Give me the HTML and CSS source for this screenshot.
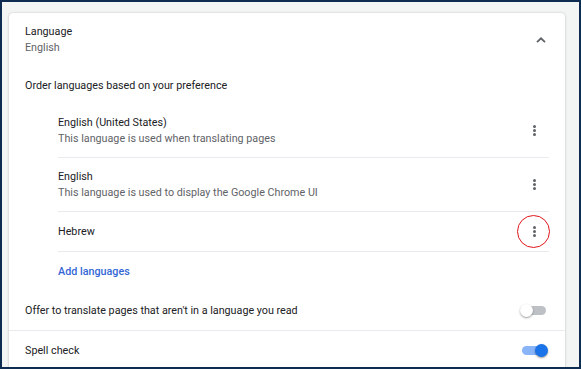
FILE: index.html
```html
<!DOCTYPE html>
<html lang="en">
<head>
    <meta charset="UTF-8">
    <meta name="viewport" content="width=device-width, initial-scale=1.0">
    <title>Languages</title>
    <link rel="stylesheet" href="styles.css">
</head>
<body>
    <div class="frame">
        <div class="card">
            <!-- Header bagian bahasa -->
            <div class="row header">
                <div class="text">
                    <div class="label">Language</div>
                    <div class="sub">English</div>
                </div>
                <svg class="chevron" width="10" height="6" viewBox="0 0 10 6">
                    <path d="M1 5.2 L5 1.3 L9 5.2" fill="none" stroke="#5f6368" stroke-width="1.8"/>
                </svg>
            </div>

            <div class="row order">Order languages based on your preference</div>

            <div class="list">
                <div class="item two-line">
                    <div class="text">
                        <div class="label">English (United States)</div>
                        <div class="sub">This language is used when translating pages</div>
                    </div>
                    <div class="kebab"><span></span><span></span><span></span></div>
                </div>
                <div class="item two-line">
                    <div class="text">
                        <div class="label">English</div>
                        <div class="sub">This language is used to display the Google Chrome UI</div>
                    </div>
                    <div class="kebab"><span></span><span></span><span></span></div>
                </div>
                <div class="item">
                    <div class="text">
                        <div class="label">Hebrew</div>
                    </div>
                    <div class="kebab marked"><span></span><span></span><span></span></div>
                </div>
                <div class="add">Add languages</div>
            </div>

            <div class="row setting">
                <div class="label">Offer to translate pages that aren't in a language you read</div>
                <div class="toggle"><div class="knob"></div></div>
            </div>
            <div class="row setting divided">
                <div class="label">Spell check</div>
                <div class="toggle on"><div class="knob"></div></div>
            </div>
        </div>
    </div>
</body>
</html>
```

FILE: styles.css
```css
html, body {
    margin: 0;
    padding: 0;
}
body {
    font-family: Roboto, "Liberation Sans", sans-serif;
    font-size: 10.75px;
    color: #202124;
}
.frame {
    width: 581px;
    height: 369px;
    box-sizing: border-box;
    border: 2px solid #0e2c52;
    background-color: #f3f4f4;
    padding: 11px 14px 0 7px;
    overflow: hidden;
}
.card {
    background-color: #fff;
    border-radius: 4px;
    box-shadow: 0 0 2px rgba(60, 64, 67, 0.25), 0 1px 3px rgba(60, 64, 67, 0.1);
    min-height: 400px;
}
.row {
    display: flex;
    align-items: center;
    justify-content: space-between;
    padding: 0 16px;
}
.label {
    line-height: 17px;
}
.sub {
    line-height: 16px;
    color: #5f6368;
}
.header {
    height: 53px;
}
.chevron {
    margin-right: 3px;
}
.order {
    height: 38px;
}
.list {
    padding: 0 16px 0 49px;
}
.item {
    display: flex;
    align-items: center;
    justify-content: space-between;
    box-sizing: border-box;
    height: 40px;
    border-top: 1px solid #e8eaed;
}
.item:first-child {
    border-top: none;
}
.item.two-line {
    height: 54px;
}
.item.two-line:first-child {
    height: 53px;
}
.kebab {
    position: relative;
    display: flex;
    flex-direction: column;
    gap: 1px;
    margin-right: 12px;
    padding: 0 1px;
}
.kebab span {
    width: 3px;
    height: 3px;
    border-radius: 50%;
    background-color: #5f6368;
}
.marked::after {
    content: "";
    position: absolute;
    left: -15px;
    top: -11px;
    width: 31px;
    height: 31px;
    border: 1.5px solid #e0161c;
    border-radius: 50%;
}
.add {
    height: 39px;
    line-height: 39px;
    border-top: 1px solid #e8eaed;
    color: #3367d6;
    font-weight: 500;
}
.setting {
    height: 39px;
}
.divided {
    border-top: 1px solid #e8eaed;
}
.toggle {
    position: relative;
    width: 24px;
    height: 9px;
    border-radius: 5px;
    background-color: #bdc1c6;
    margin-right: 3px;
}
.knob {
    position: absolute;
    left: -2px;
    top: -2px;
    width: 13px;
    height: 13px;
    border-radius: 50%;
    background-color: #fff;
    box-shadow: 0 1px 2px rgba(0, 0, 0, 0.4);
}
.toggle.on {
    background-color: #8ab4f8;
}
.toggle.on .knob {
    left: auto;
    right: -2px;
    background-color: #1a73e8;
}
```
